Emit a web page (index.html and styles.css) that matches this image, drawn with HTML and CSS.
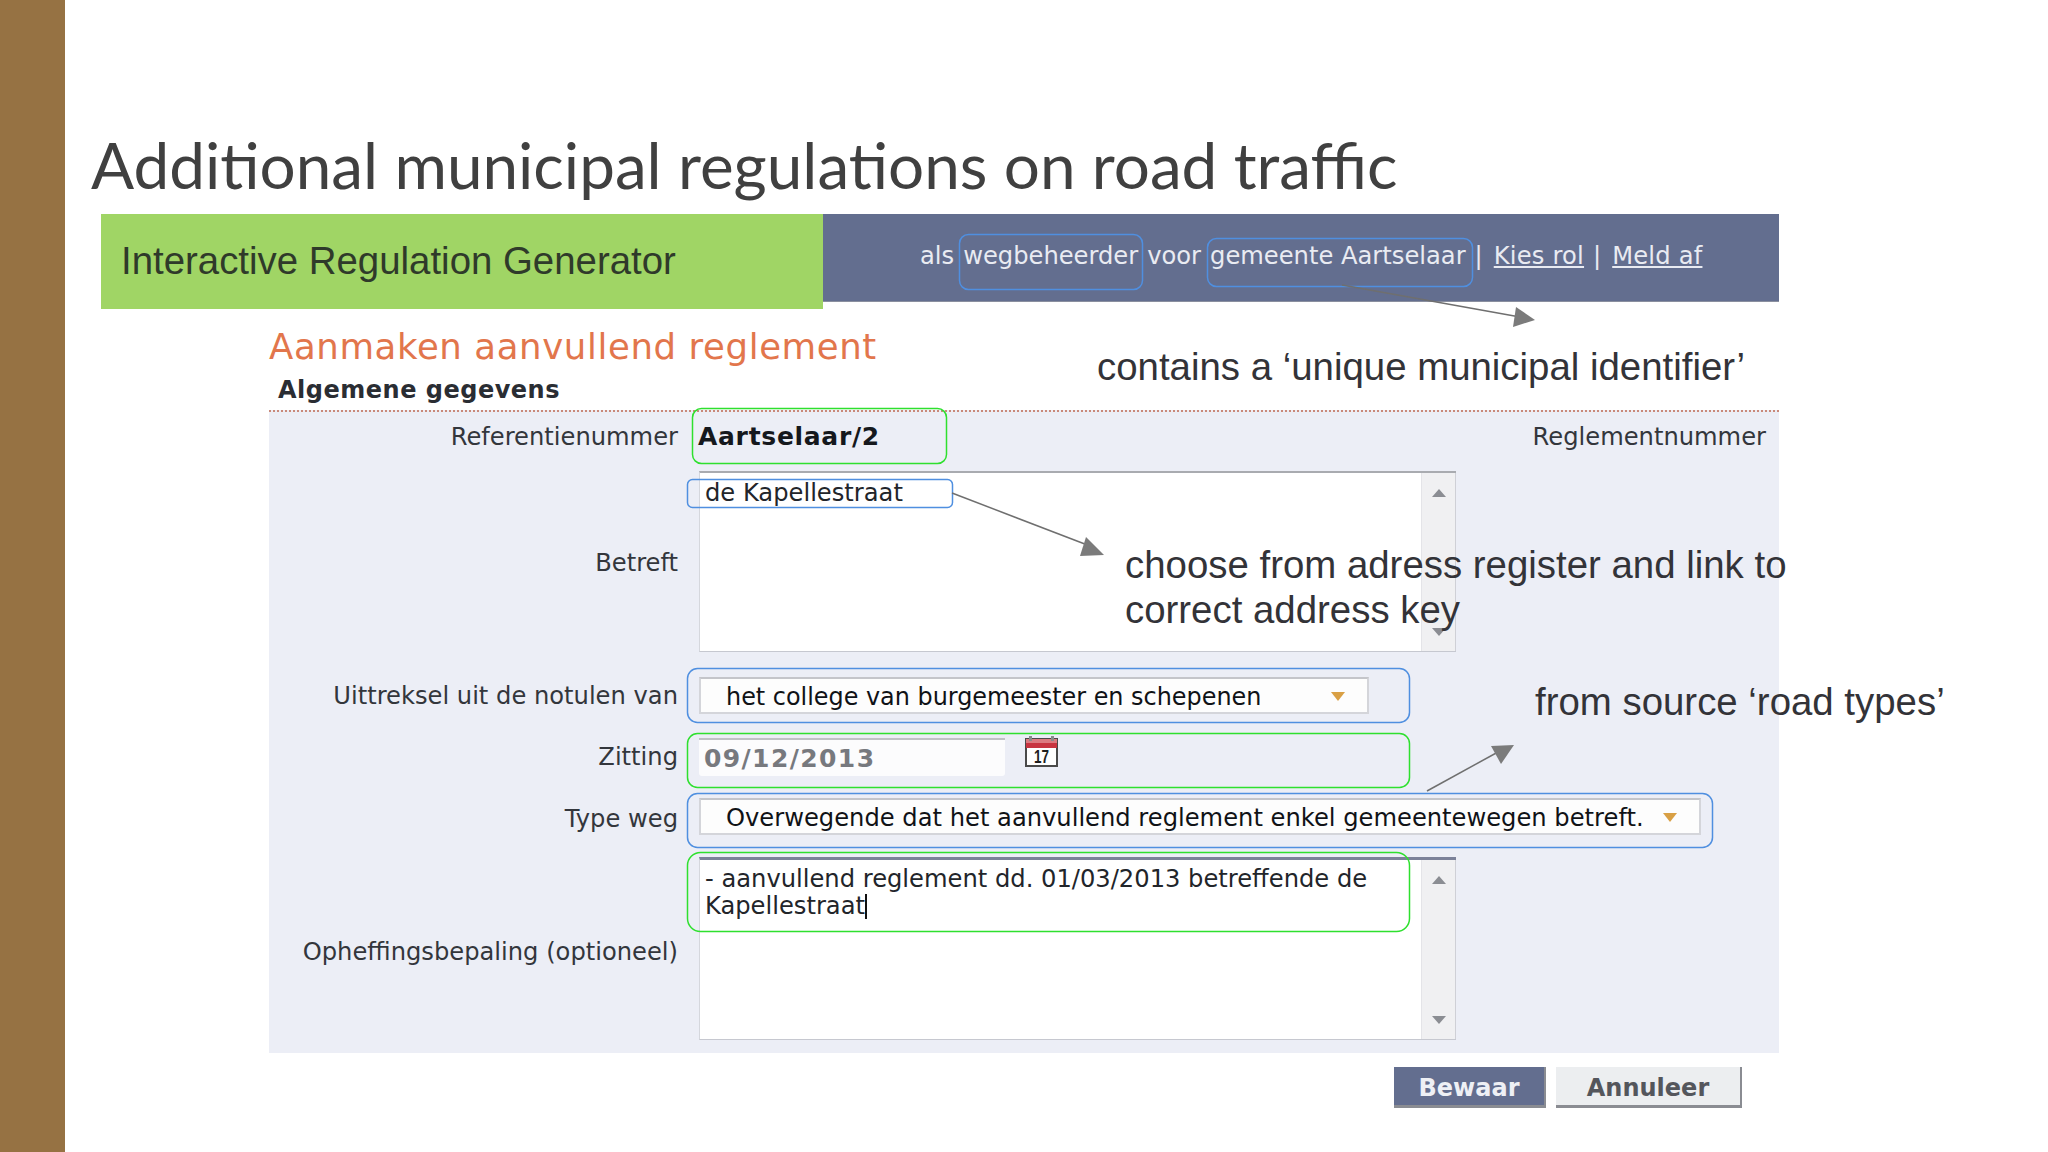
FILE: index.html
```html
<!DOCTYPE html>
<html lang="nl">
<head>
<meta charset="utf-8">
<title>Additional municipal regulations on road traffic</title>
<link rel="stylesheet" href="styles.css">
</head>
<body>
<div class="slide">
  <aside class="sidebar"></aside>
  <main class="main">
    <h1 class="title">Additional municipal regulations on road traffic</h1>
    <div class="banner">
      <div class="banner-green">Interactive Regulation Generator</div>
      <div class="banner-blue">
        <span>als</span><span>wegbeheerder</span><span>voor</span><span>gemeente Aartselaar</span><span>|</span><a class="link">Kies rol</a><span>|</span><a class="link">Meld af</a>
      </div>
    </div>
    <section class="content">
      <h2 class="heading">Aanmaken aanvullend reglement</h2>
      <h3 class="subheading">Algemene gegevens</h3>
      <div class="form">
        <div class="row row-ref">
          <label class="label">Referentienummer</label>
          <div class="ref-field"><strong class="ref-value">Aartselaar/2</strong><span class="ref-right">Reglementnummer</span></div>
        </div>
        <div class="row row-area1">
          <label class="label">Betreft</label>
          <div class="area">
            <div class="area-text">de Kapellestraat</div>
            <div class="scroll"><i class="up"></i><i class="down"></i></div>
          </div>
        </div>
        <div class="row row-sel1">
          <label class="label">Uittreksel uit de notulen van</label>
          <div class="select select-1"><span>het college van burgemeester en schepenen</span><i class="caret"></i></div>
        </div>
        <div class="row row-date">
          <label class="label">Zitting</label>
          <div class="date-field">
            <div class="date-input">09/12/2013</div>
            <svg class="cal" viewBox="0 0 35 32" width="35" height="32" aria-hidden="true">
              <rect x="2" y="4" width="31" height="27" class="cal-frame"/>
              <rect x="2" y="4" width="31" height="4" class="cal-band-top"/>
              <rect x="2" y="8" width="31" height="5" class="cal-band"/>
              <rect x="5" y="1" width="3" height="5" class="cal-ring"/>
              <rect x="27" y="1" width="3" height="5" class="cal-ring"/>
              <text x="17.5" y="28" text-anchor="middle" class="cal-num" textLength="15" lengthAdjust="spacingAndGlyphs">17</text>
            </svg>
          </div>
        </div>
        <div class="row row-sel2">
          <label class="label">Type weg</label>
          <div class="select select-2"><span>Overwegende dat het aanvullend reglement enkel gemeentewegen betreft.</span><i class="caret"></i></div>
        </div>
        <div class="row row-area2">
          <label class="label">Opheffingsbepaling (optioneel)</label>
          <div class="area area-focus">
            <div class="area-text area-text-2">- aanvullend reglement dd. 01/03/2013 betreffende de<br>Kapellestraat<b class="cursor"></b></div>
            <div class="scroll"><i class="up"></i><i class="down"></i></div>
          </div>
        </div>
      </div>
      <div class="actions">
        <button class="btn btn-primary">Bewaar</button>
        <button class="btn btn-secondary">Annuleer</button>
      </div>
    </section>
  </main>

  <svg class="marks" viewBox="0 0 2048 1152" width="2048" height="1152" aria-hidden="true">
    <g class="mark-blue">
      <rect x="959.5" y="234.5" width="183" height="55" rx="9"/>
      <rect x="1207.5" y="238.5" width="265" height="48" rx="9"/>
      <rect x="687.5" y="479.5" width="265" height="28" rx="5"/>
      <rect x="687.5" y="668.5" width="722" height="54" rx="10"/>
      <rect x="687.5" y="793.5" width="1025" height="54" rx="10"/>
    </g>
    <g class="mark-green">
      <rect x="692.5" y="408.5" width="254" height="55" rx="9"/>
      <rect x="687.5" y="733.5" width="722" height="54" rx="10"/>
      <rect x="687.5" y="852.5" width="722" height="79" rx="13"/>
    </g>
    <g class="arrow-line">
      <line x1="1342" y1="285" x2="1520" y2="317"/>
      <line x1="952" y1="493" x2="1090" y2="546"/>
      <line x1="1427" y1="791" x2="1498" y2="752"/>
    </g>
    <g class="arrow-head">
      <polygon points="1535,320 1516,307 1513,327"/>
      <polygon points="1104,555 1086,537 1080,556"/>
      <polygon points="1514,745 1491,746 1501,764"/>
    </g>
  </svg>
  <p class="note note-id">contains a ‘unique municipal identifier’</p>
  <p class="note note-addr">choose from adress register and link to<br>correct address key</p>
  <p class="note note-road">from source ‘road types’</p>
</div>
</body>
</html>
```
FILE: styles.css
```css
* { box-sizing: border-box; }
html, body { margin: 0; padding: 0; background: #fff; }
.slide {
  position: relative;
  display: flex;
  width: 2048px;
  height: 1152px;
  overflow: hidden;
  background: #fff;
}
.sidebar { width: 65px; flex: none; background: #967243; }
.main { flex: 1; padding-left: 26px; min-width: 0; }

.title {
  margin: 0;
  height: 214px;
  padding-top: 127px;
  font: 400 63.8px/76px Lato, "Open Sans", sans-serif;
  color: #404040;
  white-space: nowrap;
}

.banner { display: flex; align-items: flex-start; margin-left: 10px; width: 1678px; }
.banner-green {
  width: 722px;
  height: 95px;
  padding: 24px 0 0 20px;
  background: #a0d565;
  font: 400 38.4px/46px "Liberation Sans", Arial, sans-serif;
  color: #2f3a2a;
}
.banner-blue {
  flex: 1;
  height: 88px;
  display: flex;
  align-items: flex-start;
  gap: 9px;
  padding: 27px 0 0 97px;
  background: #636e8f;
  border-bottom: 1px solid #8a8f9f;
  color: #e9ebf2;
  font: 400 24.2px/30px "DejaVu Sans", Verdana, sans-serif;
  white-space: nowrap;
}
.link { text-decoration: underline; margin-left: 2px; letter-spacing: 0.2px; }

.content { margin-left: 178px; margin-top: -7px; width: 1510px; }
.heading {
  margin: 0;
  height: 65px;
  padding-top: 25px;
  font: 400 35.5px/40px "DejaVu Sans", Verdana, sans-serif;
  letter-spacing: 0.62px;
  color: #e2764c;
  white-space: nowrap;
}
.subheading {
  margin: 0;
  height: 43px;
  padding: 8px 0 0 9px;
  font: 700 24px/30px "DejaVu Sans", Verdana, sans-serif;
  letter-spacing: 0.5px;
  color: #2a2d33;
}
.form {
  background: #eceef6;
  border-top: 2px dotted #c9897a;
  height: 643px;
  color: #33363c;
  font: 400 24.2px/30px "DejaVu Sans", Verdana, sans-serif;
}
.row {
  display: grid;
  grid-template-columns: 409px 1fr;
  column-gap: 21px;
  align-items: center;
}
.label { text-align: right; white-space: nowrap; }
.row-ref { height: 59px; padding-bottom: 10px; }
.row-area1 { height: 181px; }
.row-area1 .label { padding-top: 2px; }
.row-sel1 { margin-top: 25px; height: 37px; }
.row-date { margin-top: 24px; height: 38px; }
.row-sel2 { margin-top: 22px; height: 37px; }
.row-sel2 .label { padding-top: 5px; }
.row-area2 { margin-top: 22px; height: 183px; }
.row-area2 .label { padding-top: 6px; }

.ref-field { display: flex; justify-content: space-between; padding-right: 13px; }
.ref-value { font-size: 25px; font-weight: 700; letter-spacing: 0.7px; color: #15181d; margin-left: -1px; }
.ref-right { color: #33363c; }

.area {
  display: flex;
  width: 757px;
  height: 100%;
  background: #fff;
  border-top: 2px solid #a9abb0;
  border-left: 1px solid #d5d7dd;
  border-bottom: 1px solid #c6c8d0;
}
.area-focus { border-top: 3px solid #7b8199; }
.area-text { flex: 1; padding: 7px 0 0 5px; color: #22252a; line-height: 27px; }
.area-text-2 { padding-top: 6px; }
.cursor {
  display: inline-block;
  width: 2px;
  height: 25px;
  margin-bottom: -5px;
  background: #111;
}
.scroll {
  width: 35px;
  flex: none;
  display: flex;
  flex-direction: column;
  justify-content: space-between;
  align-items: center;
  padding: 16px 0 15px;
  background: #f0f0f2;
  border-left: 1px solid #e4e4e8;
  border-right: 1px solid #cfd0d6;
}
.up, .down { display: block; width: 0; height: 0; border-left: 7px solid transparent; border-right: 7px solid transparent; }
.up { border-bottom: 8px solid #8b8d93; }
.down { border-top: 8px solid #8b8d93; }

.select {
  display: flex;
  align-items: center;
  justify-content: space-between;
  height: 100%;
  padding: 2px 22px 0 25px;
  background: #fdfdfd;
  border: 2px solid #d4d5da;
  border-top-color: #c4c5ca;
  color: #101216;
  white-space: nowrap;
}
.select-1 { width: 670px; font-size: 23.9px; }
.select-2 { width: 1002px; }
.caret { width: 0; height: 0; border-left: 7px solid transparent; border-right: 7px solid transparent; border-top: 9px solid #d9a045; }

.date-field { display: flex; align-items: flex-start; gap: 19px; height: 100%; }
.date-input {
  width: 306px;
  height: 100%;
  padding: 4px 0 0 5px;
  background: #fcfcfd;
  border-top: 2px solid #c0c1c6;
  border-radius: 0 0 3px 3px;
  color: #77797e;
  font-size: 25px;
  font-weight: 700;
  letter-spacing: 1.4px;
}
.cal { flex: none; margin-top: -3px; }
.cal-frame { fill: #fff; stroke: #4a4a4a; stroke-width: 2; }
.cal-band-top { fill: #dc7a80; }
.cal-band { fill: #c83440; }
.cal-ring { fill: #8a8a8a; }
.cal-num { font: 700 18px "Liberation Sans", Arial, sans-serif; fill: #1f1f1f; }

.actions { display: flex; justify-content: flex-end; gap: 10px; margin-top: 14px; padding-right: 37px; }
.btn {
  height: 41px;
  font: 700 24px/30px "DejaVu Sans", Verdana, sans-serif;
  border: 0;
  border-right: 2px solid #8a8c92;
  border-bottom: 3px solid #8a8c92;
  padding: 3px 0 0;
}
.btn-primary { width: 152px; background: #636e8f; color: #eef0f5; }
.btn-secondary { width: 186px; background: #eceef0; color: #54565c; }

.marks { position: absolute; left: 0; top: 0; pointer-events: none; }
.mark-blue rect { fill: none; stroke: #4f8fe0; stroke-width: 1.5; }
.mark-green rect { fill: none; stroke: #2ee02e; stroke-width: 1.5; }
.arrow-line line { stroke: #6f6f6f; stroke-width: 1.5; }
.arrow-head polygon { fill: #7b7b7b; }

.note {
  position: absolute;
  margin: 0;
  font: 400 38.4px/45px "Liberation Sans", Arial, sans-serif;
  color: #333338;
  white-space: nowrap;
}
.note-id { left: 1097px; top: 344px; }
.note-addr { left: 1125px; top: 542px; }
.note-road { left: 1535px; top: 679px; }
```
